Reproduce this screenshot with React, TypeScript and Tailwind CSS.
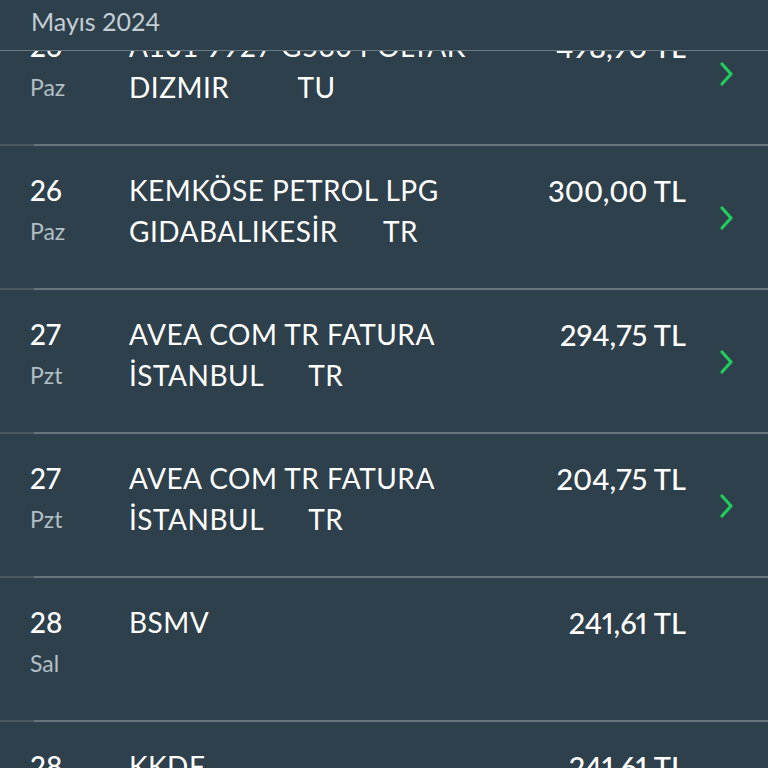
import React from "react";

type Tx = {
  day: string;
  weekday: string;
  line1: string;
  line2?: string;
  amount: string;
  chevron: boolean;
};

const txs: Tx[] = [
  { day: "26", weekday: "Paz", line1: "A101 9927 G530 POLTAK", line2: "DIZMIR         TU", amount: "498,90 TL", chevron: true },
  { day: "26", weekday: "Paz", line1: "KEMKÖSE PETROL LPG", line2: "GIDABALIKESİR      TR", amount: "300,00 TL", chevron: true },
  { day: "27", weekday: "Pzt", line1: "AVEA COM TR FATURA", line2: "İSTANBUL      TR", amount: "294,75 TL", chevron: true },
  { day: "27", weekday: "Pzt", line1: "AVEA COM TR FATURA", line2: "İSTANBUL      TR", amount: "204,75 TL", chevron: true },
  { day: "28", weekday: "Sal", line1: "BSMV", amount: "241,61 TL", chevron: false },
  { day: "28", weekday: "Sal", line1: "KKDF", amount: "241,61 TL", chevron: false },
];

const Chevron = () => (
  <svg width="18" height="26" viewBox="0 0 18 26" fill="none">
    <path d="M4 3l9 10-9 10" stroke="#22cc5c" strokeWidth="3.2" strokeLinecap="round" strokeLinejoin="round" />
  </svg>
);

const Row: React.FC<{ tx: Tx }> = ({ tx }) => (
  <div className="h-[144px] flex flex-col">
    <div className="flex-1 flex pt-[24px] leading-[41px]">
      <div className="w-[129px] pl-[30px] shrink-0">
        <div className="text-[28px] font-medium text-white proportional-nums">{tx.day}</div>
        <div className="text-[23px] text-[#b3bfc7]">{tx.weekday}</div>
      </div>
      <div className="flex-1 text-[28px] tracking-[0.5px] text-white whitespace-pre">
        <div>{tx.line1}</div>
        {tx.line2 && <div>{tx.line2}</div>}
      </div>
      <div className="w-[170px] text-right text-[29px] font-medium text-white shrink-0 proportional-nums">
        {tx.amount}
      </div>
      <div className="w-[82px] shrink-0 flex items-start justify-center pt-[35px]">
        {tx.chevron && <Chevron />}
      </div>
    </div>
    <div className="flex h-[2px]">
      <div className="w-[34px] bg-[#465761]" />
      <div className="flex-1 bg-[#66767f]" />
    </div>
  </div>
);

export default function App() {
  return (
    <div
      className="relative w-[768px] h-[768px] overflow-hidden bg-[#2e404b]"
      style={{ fontFamily: "Lato, 'Open Sans', sans-serif" }}
    >
      <div className="absolute top-0 left-0 right-0 h-[51px] bg-[#2e404b] border-b border-[#6b7b84] z-10 flex items-center pl-[31px] pb-[6px]">
        <span className="text-[25px] text-[#c3ced6]">Mayıs 2024</span>
      </div>
      <div className="-mt-[142px]">
        <div className="h-[144px]" />
        {txs.map((tx, i) => (
          <Row key={i} tx={tx} />
        ))}
      </div>
    </div>
  );
}
